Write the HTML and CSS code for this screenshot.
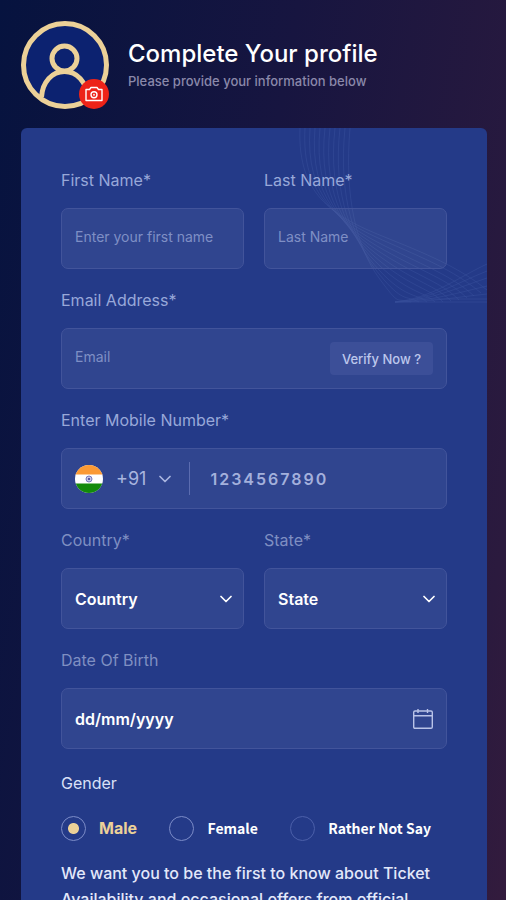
FILE: index.html
```html
<!DOCTYPE html>
<html lang="en">
<head>
    <meta charset="UTF-8">
    <meta name="viewport" content="width=device-width, initial-scale=1.0">
    <title>Complete Your profile</title>
    <link rel="stylesheet" href="styles.css">
</head>
<body>
    <header class="profile-header">
        <div class="avatar">
            <svg class="avatar-img" viewBox="0 0 88 88" fill="none" stroke="#ecd198" stroke-width="5" aria-hidden="true">
                <circle cx="44" cy="44" r="41.5" fill="#0c2270"/>
                <circle cx="43.5" cy="37.5" r="12.5"/>
                <path d="M20.500 76C21.500 61 31 50.500 43.500 50.500S65.500 61 66.500 76"/>
            </svg>
            <button type="button" class="camera-btn" aria-label="Change photo">
                <svg viewBox="0 0 18 16" fill="none" stroke="#fff" stroke-width="1.4" stroke-linejoin="round">
                    <path d="M1 3.500H4.500L6 1.500H12L13.500 3.500H17V14.500H1Z"/>
                    <circle cx="9" cy="8.8" r="3"/>
                    <circle cx="9" cy="8.8" r="0.3"/>
                </svg>
            </button>
        </div>
        <div class="heading">
            <h1>Complete Your profile</h1>
            <p>Please provide your information below</p>
        </div>
    </header>

    <main class="card">
        <!-- Faint wave lines in the corner -->
        <svg class="waves" viewBox="0 0 190 176" fill="none" stroke="#7896dc" stroke-width="0.6" aria-hidden="true">
            <path d="M3 0C0 70 40 90 90 110S165 142 190 162"/>
            <path d="M8 0C4 70 42 93 90 114S160 145 184 165"/>
            <path d="M13 0C8 70 44 96 88 118S155 148 177 168"/>
            <path d="M18 0C12 70 46 99 87 122S150 151 170 170"/>
            <path d="M23 0C16 70 48 102 86 126S144 154 162 172"/>
            <path d="M28 0C20 70 50 105 85 130S138 157 154 173"/>
            <path d="M33 0C25 70 52 108 84 134S132 160 146 174"/>
            <path d="M38 0C30 70 54 111 83 138S126 163 138 174"/>
            <path d="M43 0C35 70 56 114 82 142S118 165 130 174"/>
            <path d="M48 0C41 70 58 117 82 146S108 167 122 174"/>
            <path d="M53 0C47 70 60 120 82 150S98 169 114 174"/>
            <path d="M98 174C135 170 160 150 190 136"/>
            <path d="M98 174C135 171 160 155 190 143"/>
            <path d="M98 174C135 172 160 160 190 150"/>
            <path d="M98 174C135 173 160 165 190 158"/>
            <path d="M98 174C135 174 160 169 190 166"/>
            <path d="M98 174H190M120 171H190"/>
        </svg>

        <form class="profile-form">
            <div class="form-row">
                <div class="form-group">
                    <label for="firstName">First Name*</label>
                    <div class="field">
                        <input type="text" id="firstName" placeholder="Enter your first name">
                    </div>
                </div>
                <div class="form-group">
                    <label for="lastName">Last Name*</label>
                    <div class="field">
                        <input type="text" id="lastName" placeholder="Last Name">
                    </div>
                </div>
            </div>

            <div class="form-group">
                <label for="email">Email Address*</label>
                <div class="field">
                    <input type="email" id="email" placeholder="Email">
                    <button type="button" class="verify-btn">Verify Now ?</button>
                </div>
            </div>

            <div class="form-group">
                <label for="mobile">Enter Mobile Number*</label>
                <div class="field">
                    <button type="button" class="code-btn" aria-label="Country code +91">
                        <svg class="flag" viewBox="0 0 28 28" aria-hidden="true">
                            <clipPath id="flagClip"><circle cx="14" cy="14" r="14"/></clipPath>
                            <g clip-path="url(#flagClip)">
                                <rect width="28" height="28" fill="#fff"/>
                                <rect width="28" height="9.5" fill="#fb9a35"/>
                                <rect y="18.5" width="28" height="9.5" fill="#128a0b"/>
                            </g>
                            <circle cx="14" cy="14" r="3" fill="#c3c4e6" stroke="#7678bd"/>
                            <circle cx="14" cy="14" r="1" fill="#34368f"/>
                        </svg>
                        <span>+91</span>
                        <svg class="chevron" viewBox="0 0 12 8" aria-hidden="true"><path d="M1 1.500L6 6.500L11 1.500"/></svg>
                    </button>
                    <input type="tel" id="mobile" class="mobile-input" placeholder="1234567890">
                </div>
            </div>

            <div class="form-row">
                <div class="form-group">
                    <label for="country" class="muted">Country*</label>
                    <div class="field">
                        <select id="country"><option>Country</option></select>
                        <svg class="chevron" viewBox="0 0 12 8" aria-hidden="true"><path d="M1 1.500L6 6.500L11 1.500"/></svg>
                    </div>
                </div>
                <div class="form-group">
                    <label for="state" class="muted">State*</label>
                    <div class="field">
                        <select id="state"><option>State</option></select>
                        <svg class="chevron" viewBox="0 0 12 8" aria-hidden="true"><path d="M1 1.500L6 6.500L11 1.500"/></svg>
                    </div>
                </div>
            </div>

            <div class="form-group">
                <label for="dob" class="muted">Date Of Birth</label>
                <div class="field">
                    <input type="text" id="dob" class="date-input" placeholder="dd/mm/yyyy">
                    <svg class="calendar" viewBox="0 0 20 20" aria-hidden="true">
                        <path d="M2 2H18Q19.300 2 19.300 3.300V18Q19.300 19.300 18 19.300H2Q0.700 19.300 0.700 18V3.300Q0.700 2 2 2ZM0.700 6.700H19.300M5 0V4M14.500 0V4"/>
                    </svg>
                </div>
            </div>

            <fieldset class="gender">
                <legend>Gender</legend>
                <div class="gender-options">
                    <label class="male"><input type="radio" name="gender" checked>Male</label>
                    <label><input type="radio" name="gender">Female</label>
                    <label class="other"><input type="radio" name="gender">Rather Not Say</label>
                </div>
            </fieldset>

            <p class="consent">We want you to be the first to know about Ticket Availability and occasional offers from official</p>
        </form>
    </main>
</body>
</html>
```
FILE: styles.css
```css
* {
    box-sizing: border-box;
    margin: 0;
    padding: 0;
}
body {
    height: 100vh;
    overflow: hidden;
    padding: 21px 19px 0 21px;
    background: linear-gradient(100deg, #06133f 0%, #171540 45%, #2b1a3e 90%, #331b3d 100%);
    color: #fff;
    font-family: Inter, "Liberation Sans", sans-serif;
}
button,
input,
select {
    font-family: inherit;
    color: inherit;
}

/* Header */
.profile-header {
    display: flex;
    align-items: center;
    gap: 19px;
    margin-bottom: 19px;
}
.avatar {
    position: relative;
    width: 88px;
    height: 88px;
    flex: none;
}
.avatar-img {
    display: block;
    width: 100%;
}
.camera-btn {
    position: absolute;
    right: 0;
    bottom: 0;
    display: flex;
    align-items: center;
    justify-content: center;
    width: 30px;
    height: 30px;
    border: none;
    border-radius: 50%;
    background-color: #ed2318;
}
.camera-btn svg {
    width: 18px;
}
.heading {
    padding-top: 2px;
}
.heading h1 {
    font-size: 24px;
    font-weight: 500;
    line-height: 30px;
}
.heading p {
    color: #8a88aa;
    font-size: 13px;
    font-weight: 500;
    line-height: 24px;
}

/* Form card */
.card {
    position: relative;
    min-height: 100vh;
    padding: 42px 40px 40px;
    border-radius: 6px;
    background-color: #243a88;
}
.waves {
    position: absolute;
    top: 0;
    right: 0;
    width: 190px;
    opacity: 0.2;
}
.profile-form {
    position: relative;
}
.form-row {
    display: grid;
    grid-template-columns: repeat(2, minmax(0, 1fr));
    gap: 20px;
}
.form-group {
    margin-bottom: 21px;
}
.form-group label {
    display: block;
    margin-bottom: 18px;
    color: #98a8d9;
    font-size: 16px;
    line-height: 20px;
}
.form-group .muted {
    color: #7f8fc2;
}
.field {
    position: relative;
    display: flex;
    align-items: center;
    height: 61px;
    padding: 0 13px;
    border: 1px solid #42549b;
    border-radius: 7px;
    background-color: rgba(255, 255, 255, 0.06);
}
.field input,
.field select {
    flex: 1;
    min-width: 0;
    height: 100%;
    border: none;
    outline: none;
    background: none;
    font-size: 14px;
}
.field input {
    padding-bottom: 5px;
}
.field input::placeholder {
    color: #7f8fc5;
    opacity: 1;
}
.field select {
    appearance: none;
    font-size: 16px;
    font-weight: 600;
}
.field option {
    color: #243a88;
}
.field .date-input {
    padding-bottom: 0;
    font-size: 16px;
    font-weight: 600;
}
.field .date-input::placeholder {
    color: #fff;
}
.chevron {
    width: 12px;
    height: 8px;
    fill: none;
    stroke: currentColor;
    stroke-width: 1.7;
    stroke-linecap: round;
    stroke-linejoin: round;
}
.field > .chevron {
    position: absolute;
    right: 11px;
    pointer-events: none;
}
.verify-btn {
    height: 33px;
    padding: 0 12px;
    border: none;
    border-radius: 4px;
    background-color: #3c4f98;
    color: #bcc7ec;
    font-size: 13px;
    font-weight: 500;
}
.code-btn {
    display: flex;
    align-items: center;
    gap: 13px;
    height: 33px;
    padding-right: 18px;
    border: none;
    border-right: 1px solid #5b6cb0;
    background: none;
    color: #a9b5df;
    font-size: 18px;
}
.flag {
    width: 28px;
    height: 28px;
}
.field .mobile-input {
    padding: 0 0 0 20px;
    font-size: 16px;
    font-weight: 600;
    letter-spacing: 2px;
}
.field .mobile-input::placeholder {
    color: #a3b0dc;
}
.calendar {
    width: 20px;
    height: 20px;
    fill: none;
    stroke: #b9c3e8;
    stroke-width: 1.4;
}

/* Gender radios */
.gender {
    margin-top: 24px;
    border: none;
}
.gender legend {
    color: #d9e0f7;
    font-size: 16px;
    line-height: 20px;
}
.gender-options {
    display: flex;
    justify-content: space-between;
    padding: 23px 16px 0 0;
}
.gender-options label {
    display: flex;
    align-items: center;
    gap: 13px;
    font-family: "Noto Sans CJK SC", sans-serif;
    font-size: 14px;
    font-weight: 700;
    line-height: 25px;
}
.gender-options .male {
    color: #ecd198;
    font-family: Inter, sans-serif;
    font-size: 16px;
}
.gender-options input {
    appearance: none;
    width: 25px;
    height: 25px;
    border: 1px solid #7c8cc8;
    border-radius: 50%;
}
.gender-options .other input {
    border-color: #4c60aa;
}
.gender-options input:checked {
    background: radial-gradient(circle, #ecd198 5px, transparent 6px);
}
.consent {
    margin-top: 19px;
    color: #e3e8fa;
    font-size: 16px;
    font-weight: 500;
    line-height: 26px;
}
```
